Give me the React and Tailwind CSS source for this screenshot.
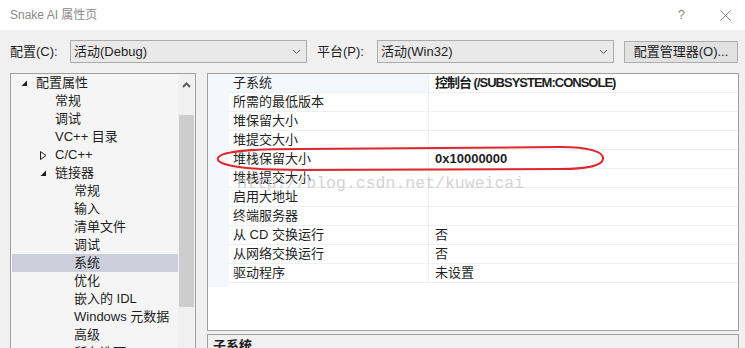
import React from 'react';

const font = { fontFamily: '"Liberation Sans", "Noto Sans CJK SC", sans-serif' };

const treeItems = [
  { text: '配置属性', level: 0, icon: 'open' },
  { text: '常规', level: 1 },
  { text: '调试', level: 1 },
  { text: 'VC++ 目录', level: 1 },
  { text: 'C/C++', level: 1, icon: 'closed' },
  { text: '链接器', level: 1, icon: 'open' },
  { text: '常规', level: 2 },
  { text: '输入', level: 2 },
  { text: '清单文件', level: 2 },
  { text: '调试', level: 2 },
  { text: '系统', level: 2, selected: true },
  { text: '优化', level: 2 },
  { text: '嵌入的 IDL', level: 2 },
  { text: 'Windows 元数据', level: 2 },
  { text: '高级', level: 2 },
  { text: '所有选项', level: 2 },
];

const indent = ['w-[9px]', 'w-[28px]', 'w-[47px]'];

const props = [
  { name: '子系统', value: '控制台 (/SUBSYSTEM:CONSOLE)', bold: true, head: true },
  { name: '所需的最低版本', value: '' },
  { name: '堆保留大小', value: '' },
  { name: '堆提交大小', value: '' },
  { name: '堆栈保留大小', value: '0x10000000', bold: true },
  { name: '堆栈提交大小', value: '' },
  { name: '启用大地址', value: '' },
  { name: '终端服务器', value: '' },
  { name: '从 CD 交换运行', value: '否' },
  { name: '从网络交换运行', value: '否' },
  { name: '驱动程序', value: '未设置' },
];

const Chevron = () => (
  <svg width="9" height="6" viewBox="0 0 9 6" className="shrink-0">
    <path d="M1 1 L4.5 4.5 L8 1" fill="none" stroke="#555" strokeWidth="1" />
  </svg>
);

const Select = ({ value, width }) => (
  <div className={`${width} h-[23px] flex items-center justify-between border border-[#acacac] bg-[#e9e9e9] pl-[3px] pr-[5px]`}>
    <span>{value}</span>
    <Chevron />
  </div>
);

const TreeIcon = ({ kind }) => {
  if (kind === 'open') {
    return (
      <svg width="7" height="7" viewBox="0 0 7 7">
        <polygon points="6,0.5 6,6 0.5,6" fill="#1e1e1e" />
      </svg>
    );
  }
  if (kind === 'closed') {
    return (
      <svg width="7" height="9" viewBox="0 0 7 9">
        <polygon points="0.5,0.5 6,4.5 0.5,8.5" fill="none" stroke="#1e1e1e" strokeWidth="1" />
      </svg>
    );
  }
  return null;
};

export default function App() {
  return (
    <div className="relative w-[745px] h-[348px] overflow-hidden bg-[#f0f0f0] text-[13px] text-[#1e1e1e]" style={font}>
      {/* Title bar */}
      <div className="h-[30px] bg-white flex items-center justify-between pl-[10px] pr-[14px]">
        <span className="text-[12px] text-[#8a8a8a]">Snake AI 属性页</span>
        <div className="flex items-center gap-[35px]">
          <span className="text-[13px] text-[#8a8a8a]">?</span>
          <svg width="11" height="11" viewBox="0 0 11 11">
            <path d="M0.5 0.5 L10.5 10.5 M10.5 0.5 L0.5 10.5" stroke="#8a8a8a" strokeWidth="1" />
          </svg>
        </div>
      </div>

      {/* Config toolbar */}
      <div className="h-[43px] pt-[10px] pl-[10px] flex items-start">
        <div className="h-[23px] flex items-center w-[60px]">配置(C):</div>
        <Select value="活动(Debug)" width="w-[237px]" />
        <div className="h-[23px] flex items-center w-[60px] ml-[10px]">平台(P):</div>
        <Select value="活动(Win32)" width="w-[237px]" />
        <div className="ml-[10px] mt-[1px] h-[22px] w-[114px] flex items-center justify-center border border-[#adadad] bg-[#e1e1e1]">
          配置管理器(O)...
        </div>
      </div>

      {/* Main area */}
      <div className="flex pl-[10px] gap-[11px]">
        {/* Tree */}
        <div className="w-[186px] h-[290px] border border-[#a0a0a0] bg-[#f5f5f5] flex">
          <div className="w-[167px] flex flex-col">
            {treeItems.map((item, i) => (
              <div
                key={i}
                className={`h-[18px] shrink-0 flex items-center ${item.selected ? 'bg-[#cccedb] ml-[1px]' : ''}`}
              >
                <div className={`${indent[item.level]} shrink-0 ${item.selected ? '-ml-[1px]' : ''}`} />
                <div className="w-[16px] shrink-0 flex items-center pl-[1px]">
                  <TreeIcon kind={item.icon} />
                </div>
                <span className="whitespace-nowrap">{item.text}</span>
              </div>
            ))}
          </div>
          <div className="w-[17px] bg-[#f0f0f0] flex flex-col items-center">
            <div className="h-[22px] flex items-center justify-center">
              <svg width="9" height="6" viewBox="0 0 9 6">
                <path d="M1 5 L4.5 1.5 L8 5" fill="none" stroke="#606060" strokeWidth="2" />
              </svg>
            </div>
            <div className="w-[15px] h-[192px] mt-[19px] bg-[#cdcdcd]" />
          </div>
        </div>

        {/* Property grid + description */}
        <div className="w-[532px] flex flex-col gap-[3px]">
          <div className="h-[258px] border border-[#a0a0a0] bg-white flex">
            <div className="w-[21px] h-[213px] bg-[#f4f7fc]" />
            <div className="flex-1 flex flex-col">
              {props.map((p, i) => (
                <div key={i} className="h-[19px] flex border-b border-[#edf0f5]">
                  <div className={`w-[200px] pl-[4px] border-r border-[#edf0f5] flex items-center ${p.head ? 'bg-[#f4f7fc]' : ''}`}>
                    {p.name}
                  </div>
                  <div className={`flex-1 pl-[6px] flex items-center whitespace-nowrap ${p.bold ? 'font-bold' : ''} ${p.head ? 'tracking-[-1px]' : ''}`}>
                    {p.value}
                  </div>
                </div>
              ))}
            </div>
          </div>
          <div className="h-[40px] border border-[#a0a0a0] bg-[#f0f0f0] pl-[5px] pt-[1px] font-bold">
            子系统
          </div>
        </div>
      </div>

      {/* Watermark */}
      <div
        className="absolute left-[237px] top-[172px] text-[16.5px] text-[#cacaca] opacity-80 pointer-events-none whitespace-nowrap"
        style={{ fontFamily: '"Liberation Mono", monospace' }}
      >
        http://blog.csdn.net/kuweicai
      </div>

      {/* Red annotation ellipse */}
      <svg className="absolute inset-0 pointer-events-none" width="745" height="348" viewBox="0 0 745 348">
        <path
          d="M218 158 C221 150 262 149 300 149 L560 147 C590 147 604 152 603 159 C602 166 585 169 560 169 L300 170 C250 170 215 166 218 158 Z"
          fill="none"
          stroke="#e0262c"
          strokeWidth="2"
        />
      </svg>
    </div>
  );
}
